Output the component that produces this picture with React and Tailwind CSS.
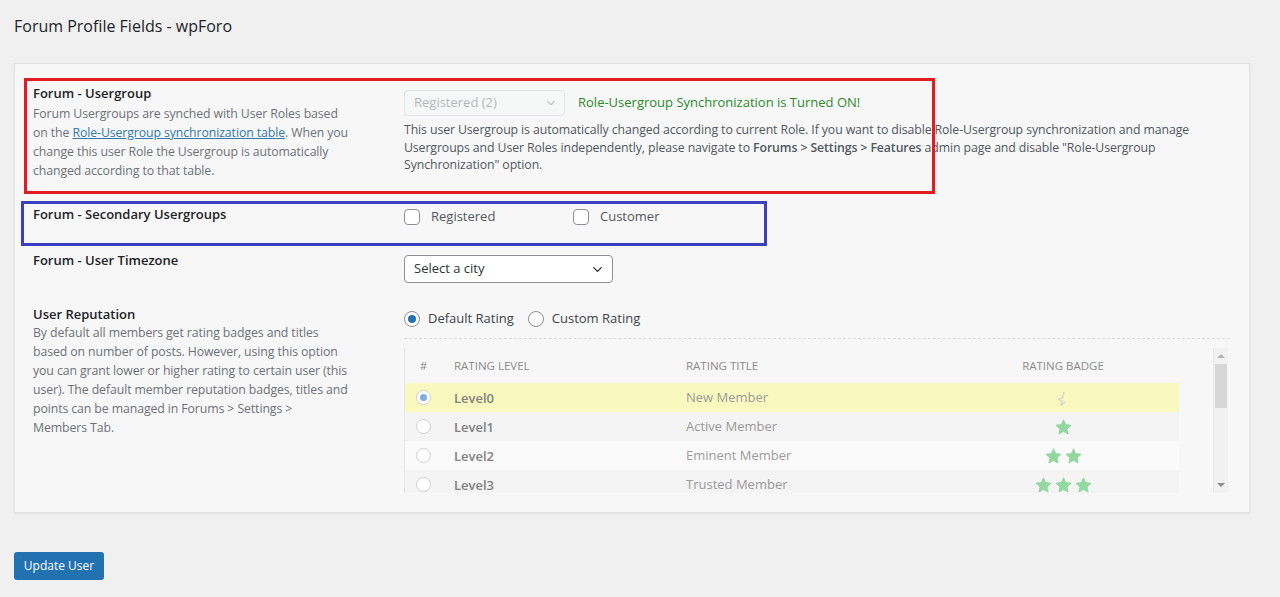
import { ChevronDown } from 'lucide-react'

const levels = [
  { id: 0, name: 'Level0', title: 'New Member', stars: 0, bg: 'bg-[#f9f9bf]' },
  { id: 1, name: 'Level1', title: 'Active Member', stars: 1, bg: 'bg-[#f4f4f4]' },
  { id: 2, name: 'Level2', title: 'Eminent Member', stars: 2, bg: 'bg-[#fafafa]' },
  { id: 3, name: 'Level3', title: 'Trusted Member', stars: 3, bg: 'bg-[#f4f4f4]' },
]

function Star() {
  return (
    <svg width="17" height="16" viewBox="0 0 24 23" className="shrink-0">
      <path
        d="M12 1.5l3.1 6.6 7.2.9-5.3 5 1.4 7.2L12 17.7l-6.4 3.5L7 14l-5.3-5 7.2-.9z"
        fill="#92d8a0"
        stroke="#92d8a0"
        strokeWidth="1.5"
        strokeLinejoin="round"
      />
    </svg>
  )
}

function HalfStar() {
  return (
    <svg width="14" height="16" viewBox="0 0 14 16">
      <path d="M8 2l-1.5 6-4 1 3.5 2-1 4 4-3" fill="none" stroke="#d9d9d0" strokeWidth="1.6" strokeLinejoin="round" />
    </svg>
  )
}

function Checkbox({ label }) {
  return (
    <label className="flex items-center gap-[11px] h-4 text-[13px] text-[#50575e]">
      <span className="w-4 h-4 rounded-[4px] border border-[#8c8f94] bg-white" />
      {label}
    </label>
  )
}

function Radio({ checked, label }) {
  return (
    <label className="flex items-center gap-[8px] text-[13px] text-[#3c434a]">
      <span className="w-4 h-4 rounded-full border border-[#8c8f94] bg-white flex items-center justify-center">
        {checked && <span className="w-2 h-2 rounded-full bg-[#2271b1]" />}
      </span>
      {label}
    </label>
  )
}

export default function App() {
  return (
    <div
      className="min-h-[597px] bg-[#f0f0f1] text-[#3c434a] pl-[14px]"
      style={{ fontFamily: '"Open Sans", "Noto Sans", sans-serif' }}
    >
      <h1 className="pt-[15px] text-[16px] leading-[22px] font-medium text-[#1d2327]">Forum Profile Fields - wpForo</h1>

      {/* Card */}
      <div className="relative mt-[26px] w-[1236px] bg-[#f7f7f7] border border-[#e2e2e2] shadow-[0_1px_2px_rgba(0,0,0,0.06)] pl-[18px] pt-[20px] pb-[19px]">
        {/* annotation boxes */}
        <div className="absolute left-[9px] top-[14px] w-[911px] h-[116px] border-[3px] border-[#e31b23] pointer-events-none" />
        <div className="absolute left-[6px] top-[137px] w-[746px] h-[45px] border-[3px] border-[#3b3fc0] pointer-events-none" />

        {/* Forum - Usergroup */}
        <div className="flex">
          <div className="w-[371px] shrink-0 pr-[10px]">
            <div className="text-[13px] leading-[18px] font-semibold text-[#1d2327]">Forum - Usergroup</div>
            <p className="mt-[2px] text-[12.3px] leading-[19px] text-[#6c7278] tracking-[-0.1px]">
              Forum Usergroups are synched with User Roles based
              <br />
              on the <a className="text-[#2f77ad] underline">Role-Usergroup synchronization table</a>. When you
              <br />
              change this user Role the Usergroup is automatically
              <br />
              changed according to that table.
            </p>
          </div>
          <div className="flex-1 pt-[6px] pr-[19px]">
            <div className="flex items-center">
              <div className="w-[161px] h-[26px] rounded-[4px] border border-[#e2e4e7] bg-[#f6f7f7] flex items-center justify-between pl-[9px] pr-[6px] text-[13px] text-[#b4b7ba]">
                Registered (2)
                <ChevronDown size={14} className="text-[#c3c4c7]" />
              </div>
              <span className="ml-[13px] text-[13px] text-[#2a8a2a]">Role-Usergroup Synchronization is Turned ON!</span>
            </div>
            <p className="mt-[5px] text-[12.3px] leading-[17.5px] text-[#50575e] tracking-[-0.1px]">
              This user Usergroup is automatically changed according to current Role. If you want to disable Role-Usergroup
              synchronization and manage Usergroups and User Roles independently, please navigate to{' '}
              <b className="font-semibold">Forums &gt; Settings &gt; Features</b> admin page and disable "Role-Usergroup
              Synchronization" option.
            </p>
          </div>
        </div>

        {/* Secondary Usergroups */}
        <div className="flex mt-[25px]">
          <div className="w-[371px] shrink-0">
            <div className="text-[13px] leading-[18px] font-semibold text-[#1d2327]">Forum - Secondary Usergroups</div>
          </div>
          <div className="flex pt-[4px]">
            <div className="w-[169px]">
              <Checkbox label="Registered" />
            </div>
            <Checkbox label="Customer" />
          </div>
        </div>

        {/* Timezone */}
        <div className="flex mt-[26px]">
          <div className="w-[371px] shrink-0">
            <div className="text-[13px] leading-[18px] font-semibold text-[#1d2327]">Forum - User Timezone</div>
          </div>
          <div className="pt-[4px]">
            <div className="w-[209px] h-[28px] rounded-[4px] border border-[#8c8f94] bg-white flex items-center justify-between pl-[9px] pr-[7px] text-[13px] text-[#2c3338]">
              Select a city
              <ChevronDown size={15} strokeWidth={2.2} className="text-[#2c3338]" />
            </div>
          </div>
        </div>

        {/* Reputation */}
        <div className="flex mt-[22px]">
          <div className="w-[371px] shrink-0 pr-[10px]">
            <div className="text-[13px] leading-[18px] font-semibold text-[#1d2327]">User Reputation</div>
            <p className="text-[12.3px] leading-[19px] text-[#6c7278] tracking-[-0.1px]">
              By default all members get rating badges and titles
              <br />
              based on number of posts. However, using this option
              <br />
              you can grant lower or higher rating to certain user (this
              <br />
              user). The default member reputation badges, titles and
              <br />
              points can be managed in Forums &gt; Settings &gt;
              <br />
              Members Tab.
            </p>
          </div>
          <div className="flex-1 pr-[19px] pt-[5px]">
            <div className="flex items-center gap-[14px] h-[18px]">
              <Radio checked label="Default Rating" />
              <Radio label="Custom Rating" />
            </div>
            <div className="mt-[10px] border-t border-dashed border-[#dcdcdc]" />
            <div className="mt-[9px] h-[145px] flex border-l border-[#e6e6e6] overflow-hidden">
              <div className="w-[774px]">
                <div className="grid grid-cols-[37px_232px_273px_232px] h-[35px] items-center text-[11.5px] text-[#8a8a8a] uppercase">
                  <span className="text-center">#</span>
                  <span className="pl-3">Rating Level</span>
                  <span className="pl-3">Rating Title</span>
                  <span className="text-center">Rating Badge</span>
                </div>
                {levels.map((l) => (
                  <div key={l.id} className={`grid grid-cols-[37px_232px_273px_232px] h-[29px] items-center ${l.bg}`}>
                    <span className="flex justify-center">
                      <span className="w-[15px] h-[15px] rounded-full border border-[#cfcfcf] bg-white flex items-center justify-center">
                        {l.id === 0 && <span className="w-[7px] h-[7px] rounded-full bg-[#7fb0d9]" />}
                      </span>
                    </span>
                    <span className="pl-3 text-[13px] font-semibold text-[#808080] pt-[2px]">{l.name}</span>
                    <span className="pl-3 text-[13px] text-[#9a9a9a]">{l.title}</span>
                    <span className="flex justify-center gap-[3px]">
                      {l.stars === 0 ? <HalfStar /> : Array.from({ length: l.stars }).map((_, i) => <Star key={i} />)}
                    </span>
                  </div>
                ))}
              </div>
              <div className="flex-1" />
              {/* scrollbar */}
              <div className="w-[15px] mr-[2px] bg-[#f1f1f1] border-l border-[#e9e9e9] flex flex-col items-center">
                <div className="h-[16px] flex items-center justify-center">
                  <span className="w-0 h-0 border-l-[4px] border-r-[4px] border-b-[4px] border-l-transparent border-r-transparent border-b-[#b5b5b5]" />
                </div>
                <div className="w-[12px] h-[44px] bg-[#d7d7d7]" />
                <div className="flex-1" />
                <div className="h-[16px] flex items-center justify-center">
                  <span className="w-0 h-0 border-l-[4px] border-r-[4px] border-t-[4px] border-l-transparent border-r-transparent border-t-[#8a8a8a]" />
                </div>
              </div>
            </div>
          </div>
        </div>
      </div>

      <button className="mt-[39px] w-[90px] h-[28px] rounded-[3px] bg-[#2271b1] text-white text-[12px]">Update User</button>
    </div>
  )
}
